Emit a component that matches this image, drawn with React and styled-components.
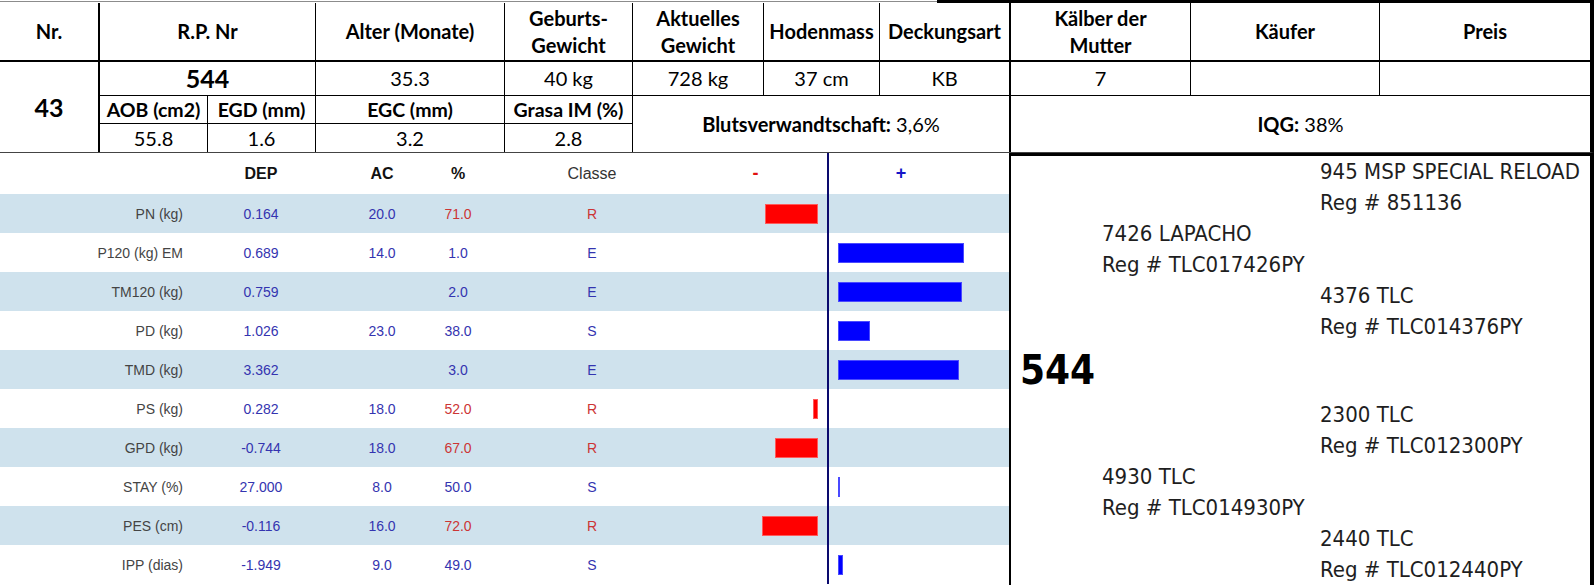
import React from 'react';
import styled, { createGlobalStyle } from 'styled-components';

const GlobalStyle = createGlobalStyle`
  html, body {
    margin: 0;
    padding: 0;
    background: #fff;
  }
  body {
    font-family: Lato, "Liberation Sans", sans-serif;
    color: #000;
  }
`;

const rows = [
  { label: 'PN (kg)', dep: '0.164', ac: '20.0', pct: '71.0', cls: 'R', bar: -53 },
  { label: 'P120 (kg) EM', dep: '0.689', ac: '14.0', pct: '1.0', cls: 'E', bar: 126 },
  { label: 'TM120 (kg)', dep: '0.759', ac: '', pct: '2.0', cls: 'E', bar: 124 },
  { label: 'PD (kg)', dep: '1.026', ac: '23.0', pct: '38.0', cls: 'S', bar: 32 },
  { label: 'TMD (kg)', dep: '3.362', ac: '', pct: '3.0', cls: 'E', bar: 121 },
  { label: 'PS (kg)', dep: '0.282', ac: '18.0', pct: '52.0', cls: 'R', bar: -5 },
  { label: 'GPD (kg)', dep: '-0.744', ac: '18.0', pct: '67.0', cls: 'R', bar: -43 },
  { label: 'STAY (%)', dep: '27.000', ac: '8.0', pct: '50.0', cls: 'S', bar: 2 },
  { label: 'PES (cm)', dep: '-0.116', ac: '16.0', pct: '72.0', cls: 'R', bar: -56 },
  { label: 'IPP (dias)', dep: '-1.949', ac: '9.0', pct: '49.0', cls: 'S', bar: 5 },
];

const App = () => {
  return (
    <>
      <GlobalStyle />
      <Sheet>
        <TopEdge />
        <InfoTable>
          <Cell $col="1" $row="1" $bold $right="2px" $bottom="2px">Nr.</Cell>
          <Cell $col="2 / 4" $row="1" $bold $bottom="2px">R.P. Nr</Cell>
          <Cell $col="4" $row="1" $bold $bottom="2px">Alter (Monate)</Cell>
          <Cell $col="5" $row="1" $bold $bottom="2px">Geburts-<br />Gewicht</Cell>
          <Cell $col="6" $row="1" $bold $bottom="2px">Aktuelles<br />Gewicht</Cell>
          <Cell $col="7" $row="1" $bold $bottom="2px">Hodenmass</Cell>
          <Cell $col="8" $row="1" $bold $right="2px" $bottom="2px">Deckungsart</Cell>
          <Cell $col="9" $row="1" $bold $bottom="2px">Kälber der<br />Mutter</Cell>
          <Cell $col="10" $row="1" $bold $bottom="2px">Käufer</Cell>
          <Cell $col="11" $row="1" $bold $right="0" $bottom="2px">Preis</Cell>

          <Cell $col="1" $row="2 / 5" $bold $size={25} $right="2px">43</Cell>
          <Cell $col="2 / 4" $row="2" $bold $size={25}>544</Cell>
          <Cell $col="4" $row="2">35.3</Cell>
          <Cell $col="5" $row="2">40 kg</Cell>
          <Cell $col="6" $row="2">728 kg</Cell>
          <Cell $col="7" $row="2">37 cm</Cell>
          <Cell $col="8" $row="2" $right="2px">KB</Cell>
          <Cell $col="9" $row="2">7</Cell>
          <Cell $col="10" $row="2" />
          <Cell $col="11" $row="2" $right="0" />

          <Cell $col="2" $row="3" $bold $size={19.5}>AOB (cm2)</Cell>
          <Cell $col="3" $row="3" $bold $size={19.5}>EGD (mm)</Cell>
          <Cell $col="4" $row="3" $bold $size={19.5}>EGC (mm)</Cell>
          <Cell $col="5" $row="3" $bold $size={19.5}>Grasa IM (%)</Cell>
          <Cell $col="6 / 9" $row="3 / 5" $right="2px">
            <span><b>Blutsverwandtschaft:</b> 3,6%</span>
          </Cell>
          <Cell $col="9 / 12" $row="3 / 5" $right="0">
            <span><b>IQG:</b> 38%</span>
          </Cell>

          <Cell $col="2" $row="4">55.8</Cell>
          <Cell $col="3" $row="4">1.6</Cell>
          <Cell $col="4" $row="4">3.2</Cell>
          <Cell $col="5" $row="4">2.8</Cell>
        </InfoTable>

        <Lower>
          <ChartPanel>
            <ChartRow $head>
              <span />
              <HeadText>DEP</HeadText>
              <HeadText>AC</HeadText>
              <HeadText>%</HeadText>
              <HeadText $plain>Classe</HeadText>
              <NegCell>
                <SignMark $color="#e01010" $pad="0 16px 0 0">-</SignMark>
              </NegCell>
              <PosCell>
                <SignMark $color="#1515c8" $pad="0 36px 0 0">+</SignMark>
              </PosCell>
            </ChartRow>
            {rows.map((r, i) => (
              <ChartRow key={r.label} $shade={i % 2 === 0}>
                <Label>{r.label}</Label>
                <Value>{r.dep}</Value>
                <Value>{r.ac}</Value>
                <Value $red={r.cls === 'R'}>{r.pct}</Value>
                <Value $red={r.cls === 'R'}>{r.cls}</Value>
                <NegCell $bars>
                  {r.bar < 0 && <Bar $neg style={{ width: -r.bar }} />}
                </NegCell>
                <PosCell $bars>
                  {r.bar > 0 && <Bar style={{ width: r.bar }} />}
                </PosCell>
              </ChartRow>
            ))}
          </ChartPanel>

          <Pedigree>
            <Entry $gen={3}>
              <div>945 MSP SPECIAL RELOAD</div>
              <div>Reg # 851136</div>
            </Entry>
            <Entry $gen={2}>
              <div>7426 LAPACHO</div>
              <div>Reg # TLC017426PY</div>
            </Entry>
            <Entry $gen={3}>
              <div>4376 TLC</div>
              <div>Reg # TLC014376PY</div>
            </Entry>
            <Subject>544</Subject>
            <Entry $gen={3}>
              <div>2300 TLC</div>
              <div>Reg # TLC012300PY</div>
            </Entry>
            <Entry $gen={2}>
              <div>4930 TLC</div>
              <div>Reg # TLC014930PY</div>
            </Entry>
            <Entry $gen={3}>
              <div>2440 TLC</div>
              <div>Reg # TLC012440PY</div>
            </Entry>
          </Pedigree>
        </Lower>
      </Sheet>
    </>
  );
};

export default App;

const Sheet = styled.div`
  width: 1594px;
  height: 585px;
  display: flex;
  flex-direction: column;
  overflow: hidden;
`;

const TopEdge = styled.div`
  height: 3px;
  flex: none;
  background:
    linear-gradient(90deg, transparent 937px, #000 937px),
    linear-gradient(180deg, transparent 1px, #8c8c8c 1px, #8c8c8c 2px, transparent 2px);
`;

const InfoTable = styled.div`
  flex: none;
  display: grid;
  grid-template-columns: 100px 108px 108px 189px 128px 131px 116px 131px 180px 189px 210px;
  grid-template-rows: 59px 34px 28px 28px;
  border-right: 4px solid #000;
  border-bottom: 1px solid #444;
`;

const Cell = styled.div`
  grid-column: ${p => p.$col};
  grid-row: ${p => p.$row};
  box-sizing: border-box;
  display: flex;
  align-items: center;
  justify-content: center;
  text-align: center;
  border-right: ${p => p.$right || '1px'} solid #000;
  border-bottom: ${p => (p.$row === '4' || p.$row.includes('/ 5') ? '0' : p.$bottom || '1px')} solid #000;
  font-family: Lato, "Liberation Sans", sans-serif;
  font-size: ${p => p.$size || 20}px;
  font-weight: ${p => (p.$bold ? 700 : 400)};
  line-height: 27px;
  white-space: nowrap;

  b {
    font-weight: 700;
  }
`;

const Lower = styled.div`
  flex: 1;
  display: flex;
  min-height: 0;
`;

const ChartPanel = styled.div`
  width: 1009px;
  flex: none;
  display: flex;
  flex-direction: column;
  font-family: "Liberation Sans", Arial, sans-serif;
`;

const ChartRow = styled.div`
  display: grid;
  grid-template-columns: 190px 142px 100px 52px 216px 129px 1fr;
  height: ${p => (p.$head ? 41 : 39)}px;
  flex: none;
  background: ${p => (p.$shade ? '#cfe2ed' : '#fff')};
  align-items: stretch;
`;

const HeadText = styled.div`
  display: flex;
  align-items: center;
  justify-content: center;
  font-size: 16px;
  font-weight: ${p => (p.$plain ? 400 : 700)};
  color: ${p => (p.$plain ? '#333' : '#111')};
`;

const Label = styled.div`
  display: flex;
  align-items: center;
  justify-content: flex-end;
  padding-right: 7px;
  font-size: 14px;
  color: #444;
`;

const Value = styled.div`
  display: flex;
  align-items: center;
  justify-content: center;
  font-size: 14px;
  color: ${p => (p.$red ? '#cc3535' : '#3434b0')};
`;

const NegCell = styled.div`
  box-sizing: border-box;
  display: flex;
  align-items: center;
  justify-content: ${p => (p.$bars ? 'flex-end' : 'center')};
  padding-right: ${p => (p.$bars ? '9px' : '0')};
  border-right: 2px solid #0a0a6e;
`;

const PosCell = styled.div`
  box-sizing: border-box;
  display: flex;
  align-items: center;
  justify-content: ${p => (p.$bars ? 'flex-start' : 'center')};
  padding-left: ${p => (p.$bars ? '9px' : '0')};
`;

const SignMark = styled.div`
  width: 100%;
  box-sizing: border-box;
  padding: ${p => p.$pad};
  text-align: center;
  font-size: 18px;
  font-weight: 700;
  color: ${p => p.$color};
`;

const Bar = styled.div`
  height: 20px;
  box-sizing: border-box;
  background: ${p => (p.$neg ? '#ff0000' : '#0000ff')};
  border: 1px solid ${p => (p.$neg ? '#ff5a5a' : '#4a4aff')};
`;

const Pedigree = styled.div`
  flex: 1;
  box-sizing: border-box;
  border-top: 3px solid #000;
  border-left: 2px solid #000;
  border-right: 4px solid #000;
  padding-left: 9px;
  font-family: "DejaVu Sans Condensed", "DejaVu Sans", sans-serif;
  font-size: 22px;
  color: #1e1e1e;
  line-height: 31px;
  display: flex;
  flex-direction: column;
`;

const Entry = styled.div`
  padding-left: ${p => (p.$gen === 3 ? 300 : 82)}px;
  white-space: nowrap;
`;

const Subject = styled.div`
  height: 62px;
  display: flex;
  align-items: center;
  font-family: "DejaVu Sans Condensed", "DejaVu Sans", sans-serif;
  font-weight: 700;
  font-size: 40px;
  color: #000;
`;
